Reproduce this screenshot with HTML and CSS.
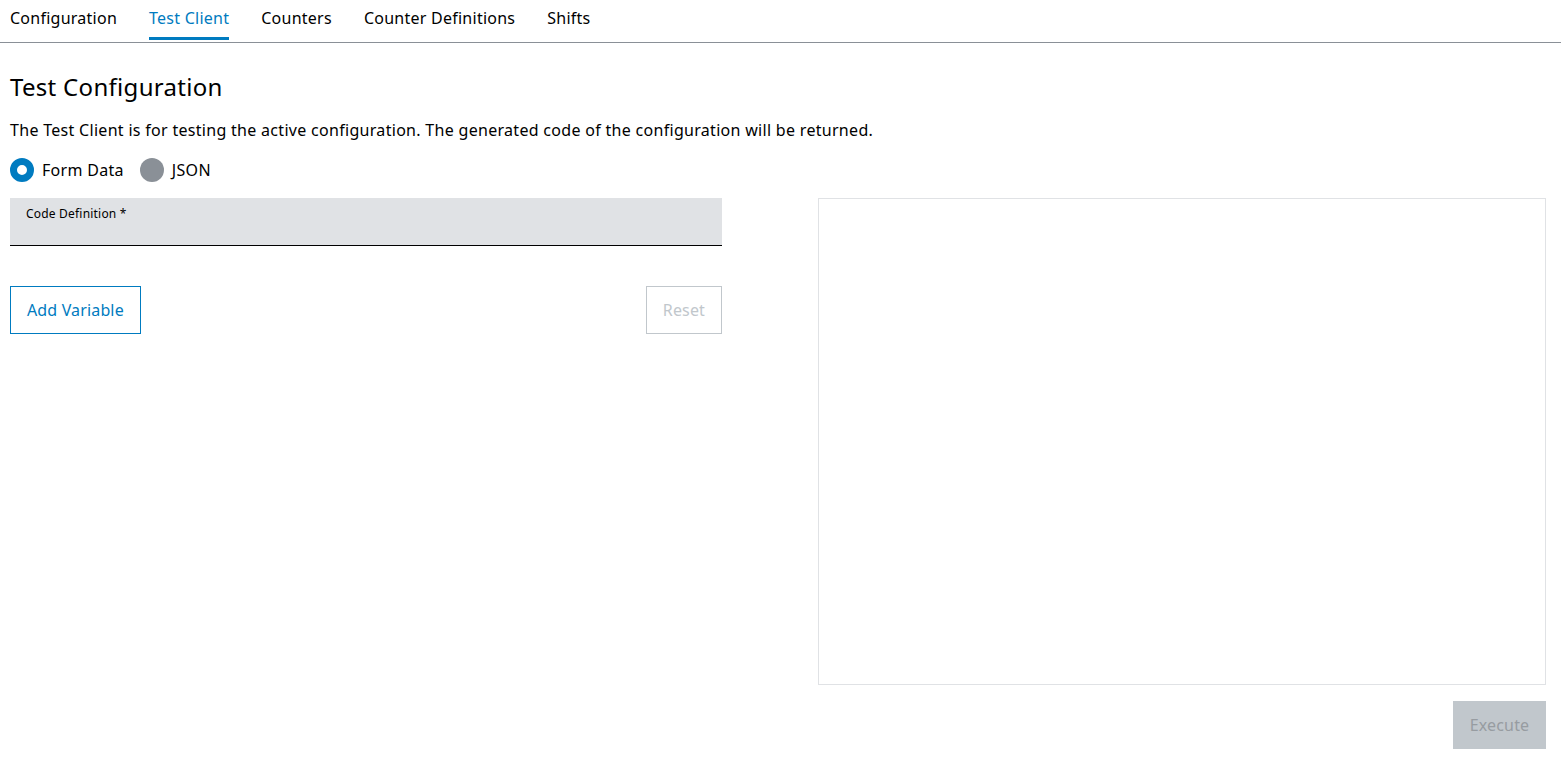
FILE: index.html
```html
<!DOCTYPE html>
<html lang="en">
  <head>
    <meta charset="utf-8">
    <title>Test Client</title>
    <link rel="stylesheet" href="styles.css">
  </head>
  <body>
    <nav class="tabs">
      <a class="tab">Configuration</a>
      <a class="tab active">Test Client</a>
      <a class="tab">Counters</a>
      <a class="tab">Counter Definitions</a>
      <a class="tab">Shifts</a>
    </nav>

    <main class="page">
      <h1 class="title">Test Configuration</h1>
      <p class="intro">The Test Client is for testing the active configuration. The generated code of the configuration will be returned.</p>

      <div class="radios">
        <label class="radio"><span class="dot checked"></span>Form Data</label>
        <label class="radio"><span class="dot"></span>JSON</label>
      </div>

      <div class="columns">
        <div class="left">
          <div class="field">
            <span class="field-label">Code Definition *</span>
          </div>
          <div class="actions">
            <button class="btn btn-outline">Add Variable</button>
            <button class="btn btn-disabled">Reset</button>
          </div>
        </div>
        <div class="right">
          <div class="result"></div>
          <div class="exec-row">
            <button class="btn btn-exec">Execute</button>
          </div>
        </div>
      </div>
    </main>
  </body>
</html>
```

FILE: styles.css
```css
body{
  margin:0;
  background:#fff;
  font-family: "Noto Sans", sans-serif;
  color:#000;
  letter-spacing:0.3px;
}

.tabs{
  display:flex;
  gap:32px;
  padding:0 10px;
  height:42px;
  border-bottom:1px solid #8a9097;
}
.tab{
  font-size:16px;
  letter-spacing:0.25px;
  line-height:36px;
  height:37px;
  color:#000;
  border-bottom:3px solid transparent;
}
.tab.active{
  color:#007bc0;
  border-bottom-color:#007bc0;
}

.page{
  padding:0 15px 0 10px;
}
.title{
  font-size:24px;
  font-weight:normal;
  margin:29px 0 0;
  line-height:30px;
}
.intro{
  font-size:16px;
  margin:16px 0 0;
  line-height:24px;
}

.radios{
  display:flex;
  gap:16px;
  margin-top:16px;
  height:24px;
}
.radio{
  display:flex;
  align-items:center;
  gap:8px;
  font-size:16px;
}
.dot{
  width:24px;
  height:24px;
  border-radius:50%;
  background:#8a9097;
  box-sizing:border-box;
}
.dot.checked{
  background:#fff;
  border:7px solid #007bc0;
}

.columns{
  display:flex;
  gap:96px;
  margin-top:16px;
}
.left{
  width:712px;
}
.right{
  width:728px;
}

.field{
  height:48px;
  background:#e0e2e5;
  border-bottom:1px solid #000;
  padding:3px 16px 0;
  box-sizing:border-box;
}
.field-label{
  font-size:12px;
  letter-spacing:0.2px;
}

.actions{
  display:flex;
  justify-content:space-between;
  margin-top:40px;
}
.btn{
  height:48px;
  padding:0 16px;
  font-family:inherit;
  font-size:16px;
  letter-spacing:0.15px;
  background:#fff;
  cursor:pointer;
}
.btn-outline{
  border:1px solid #007bc0;
  color:#007bc0;
}
.btn-disabled{
  border:1px solid #c1c7cc;
  color:#c1c7cc;
}

.result{
  height:487px;
  border:1px solid #e0e2e5;
  box-sizing:border-box;
}
.exec-row{
  display:flex;
  justify-content:flex-end;
  margin-top:16px;
}
.btn-exec{
  width:93px;
  border:none;
  background:#c1c7cc;
  color:#979ca1;
}
```
